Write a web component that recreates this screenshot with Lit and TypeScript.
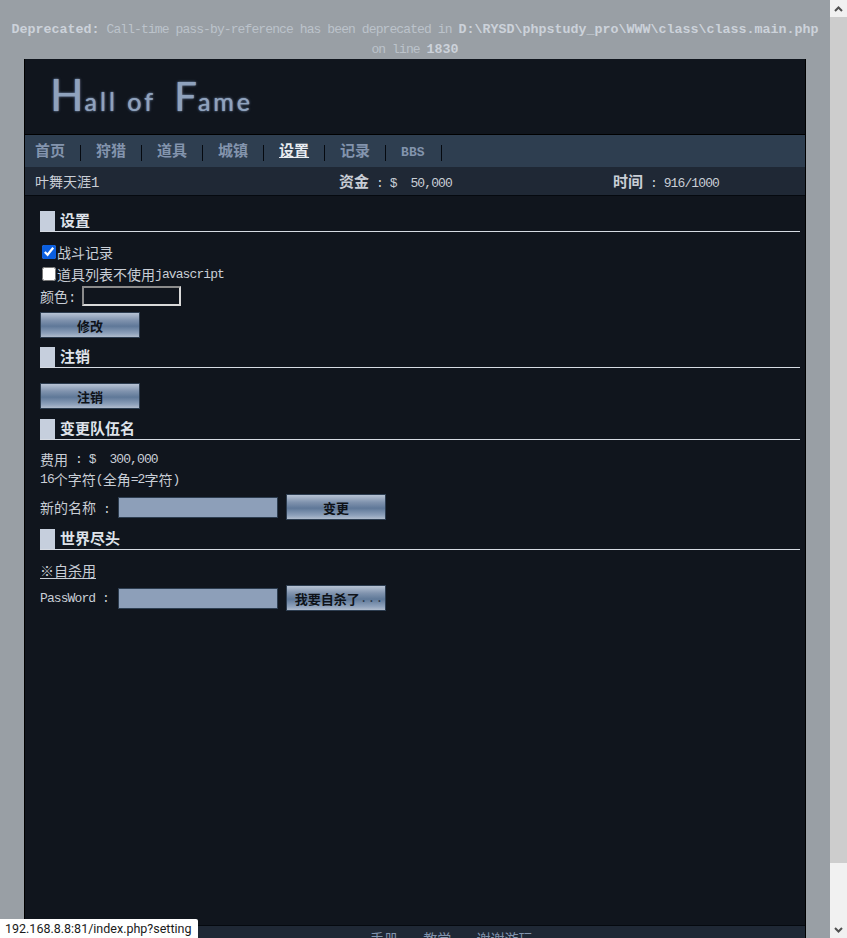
import { LitElement, html, css } from "lit";
import { customElement } from "lit/decorators.js";

@customElement("app-root")
export class AppRoot extends LitElement {
  static styles = css`
    :host { display: block; height: 938px; overflow: hidden; position: relative; font-family: "Liberation Mono", "Noto Sans CJK SC", monospace; font-size: 14px; color: #c9ced6; }
    .window { display: flex; height: 938px; }
    .page { flex: 1; min-width: 0; background: #999fa5; display: flex; flex-direction: column; align-items: center; overflow: hidden; }
    .err { width: 830px; flex: none; box-sizing: border-box; padding-top: 20px; text-align: center; font-size: 13px; letter-spacing: -0.9px; line-height: 20px; height: 59px; color: #bcc3cb; white-space: nowrap; }
    .err b { color: #ccd2da; font-size: 13.33px; letter-spacing: 0; }
    .wrap { width: 782px; flex: none; box-sizing: border-box; background: #10151d; border: solid #000; border-width: 0 1px; display: flex; flex-direction: column; height: 897px; }
    .logo { height: 76px; box-sizing: border-box; padding-left: 25px; display: flex; align-items: center; color: #8fa2bd; font: 400 25px "Lato", sans-serif; letter-spacing: 3px; text-shadow: 0 0 1px #8fa2bd, 0 0 3px #5f7594; border-bottom: 1px solid #000; white-space: pre; }
    .logo .word { position: relative; top: -2px; }
    .logo .cap { font-size: 44px; line-height: 40px; letter-spacing: 1px; }
    .logo .capf { font-size: 40px; line-height: 40px; letter-spacing: 1px; }
    .nav { height: 32px; background: #2e3e50; display: flex; align-items: center; padding: 3px 0 0 10px; font-size: 15px; font-weight: 700; color: #8394ad; box-sizing: border-box; }
    .nav a { padding-right: 15px; margin-right: 15px; border-right: 1px solid #05090f; line-height: 16px; }
    .nav a.on { color: #e8ecf1; text-decoration: underline; }
    .nav a.bbs { font-size: 13px; padding-right: 16px; }
    .status { height: 29px; background: #1f2835; display: flex; align-items: center; border-bottom: 1px solid #05090f; box-sizing: border-box; color: #c9ced6; font-size: 13px; letter-spacing: -0.9px; }
    .status > div { white-space: pre; }
    .status .name { width: 314px; padding-left: 10px; box-sizing: border-box; font-size: 14px; letter-spacing: 0; }
    .status .fund { width: 274px; }
    .status b { font-size: 15px; letter-spacing: 0; }
    .body { flex: 1; padding: 15px 5px 0 15px; }
    h2 { margin: 0; font-size: 15px; line-height: 23px; height: 21px; box-sizing: border-box; font-weight: 700; color: #dfe3ea; border-bottom: 1px solid #d6dbe3; display: flex; gap: 5px; }
    h2 i { display: block; width: 15px; height: 20px; background: #c6cfdd; }
    .sec { margin-bottom: 10px; }
    .sec.tight { margin-bottom: 9px; }
    .p { margin-top: 9px; }
    .p.logout { margin-top: 15px; }
    .p.end { margin-top: 10px; }
    .row { display: flex; align-items: center; height: 22px; white-space: pre; font-size: 14px; }
    .row.line { height: 20px; }
    .row.form { height: 26px; margin-top: 5px; }
    .m { font-size: 13px; letter-spacing: -0.9px; }
    .row input[type=checkbox] { width: 14px; height: 14px; margin: 0 1px 0 2px; accent-color: #0b5fe0; }
    .color { width: 99px; height: 20px; box-sizing: border-box; border: 2px solid #d9d9d9; border-top-color: #8b8b8b; border-left-color: #8b8b8b; background: #10151d; margin-left: 6px; }
    .btn { width: 100px; height: 26px; flex: none; box-sizing: border-box; border: 1px solid #2d3d50; background: linear-gradient(#b7c3d4 0, #8093ae 30%, #5f7898 55%, #8ea1bb 85%, #b0bccd 100%); display: flex; align-items: center; justify-content: center; color: #0e1218; font-size: 13px; font-weight: 700; white-space: nowrap; }
    .btn.first { margin-top: 5px; }
    .btn.long { padding-left: 6px; }
    .dots { color: #2c3a4c; font-weight: 400; }
    .tx { width: 160px; height: 21px; flex: none; box-sizing: border-box; background: #8d9fb9; border: 1px solid #2d3d50; margin-right: 8px; }
    .lbl { width: 78px; flex: none; }
    u { text-underline-offset: 2px; }
    .foot { height: 31px; flex: none; background: #1f2835; border-top: 1px solid #05090f; box-sizing: border-box; padding-left: 345px; font-size: 14px; line-height: 28px; color: #8394ad; white-space: pre; }
    .bar { width: 17px; flex: none; background: #f1f1f1; display: flex; flex-direction: column; }
    .arrow { height: 17px; display: flex; align-items: center; justify-content: center; flex: none; }
    .thumb { height: 846px; background: #cdcdcd; flex: none; }
    .gap { flex: 1; }
    .tip { position: absolute; left: 0; bottom: 0; width: 198px; height: 19px; background: #fff; color: #1a1a1a; font: 12.5px/19px Roboto, sans-serif; padding-left: 5px; box-sizing: border-box; white-space: nowrap; border-top-right-radius: 2px; }
  `;

  render() {
    return html`
      <div class="window">
        <div class="page">
          <div class="err"><b>Deprecated:</b> Call-time pass-by-reference has been deprecated in <b>D:\\RYSD\\phpstudy_pro\\WWW\\class\\class.main.php</b><br />on line <b>1830</b></div>
          <div class="wrap">
            <div class="logo"><span class="word"><span class="cap">H</span>all of  <span class="capf">F</span>ame</span></div>
            <div class="nav">
              <a>首页</a><a>狩猎</a><a>道具</a><a>城镇</a><a class="on">设置</a><a>记录</a><a class="bbs">BBS</a>
            </div>
            <div class="status">
              <div class="name">叶舞天涯1</div>
              <div class="fund"><b>资金</b> : $  50,000</div>
              <div><b>时间</b> : 916/1000</div>
            </div>
            <div class="body">
              <div class="sec tight">
                <h2><i></i>设置</h2>
                <div class="p">
                  <div class="row"><input type="checkbox" checked />战斗记录</div>
                  <div class="row"><input type="checkbox" />道具列表不使用<span class="m">javascript</span></div>
                  <div class="row">颜色:<div class="color"></div></div>
                  <div class="btn first">修改</div>
                </div>
              </div>
              <div class="sec">
                <h2><i></i>注销</h2>
                <div class="p logout"><div class="btn">注销</div></div>
              </div>
              <div class="sec tight">
                <h2><i></i>变更队伍名</h2>
                <div class="p">
                  <div class="row line">费用<span class="m"> : $  300,000</span></div>
                  <div class="row line"><span class="m">16</span>个字符<span class="m">(</span>全角<span class="m">=2</span>字符<span class="m">)</span></div>
                  <div class="row form"><span class="lbl">新的名称<span class="m"> :</span></span><div class="tx"></div><div class="btn">变更</div></div>
                </div>
              </div>
              <div class="sec">
                <h2><i></i>世界尽头</h2>
                <div class="p end">
                  <div class="row line"><u>※自杀用</u></div>
                  <div class="row form"><span class="lbl m">PassWord :</span><div class="tx"></div><div class="btn long">我要自杀了<span class="dots">...</span></div></div>
                </div>
              </div>
            </div>
            <div class="foot">手册   教学   谢谢游玩</div>
          </div>
        </div>
        <div class="bar">
          <div class="arrow"><svg width="9" height="6" viewBox="0 0 9 6"><path d="M1 5l3.5-3.5L8 5" fill="none" stroke="#505050" stroke-width="2"/></svg></div>
          <div class="thumb"></div>
          <div class="gap"></div>
          <div class="arrow"><svg width="9" height="6" viewBox="0 0 9 6"><path d="M1 1l3.5 3.5L8 1" fill="none" stroke="#505050" stroke-width="2"/></svg></div>
        </div>
      </div>
      <div class="tip">192.168.8.8:81/index.php?setting</div>
    `;
  }
}
